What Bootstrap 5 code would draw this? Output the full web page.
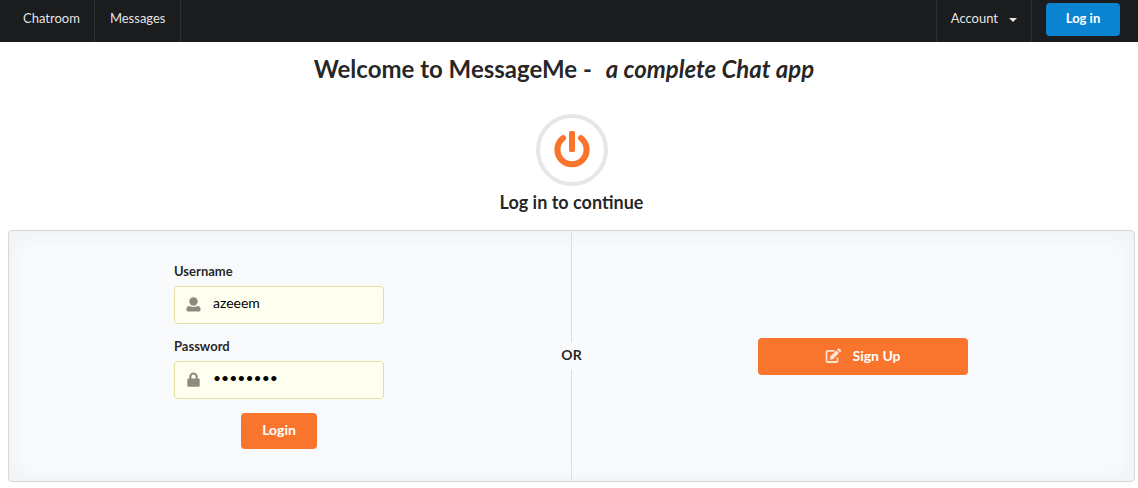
<!DOCTYPE html>
<html lang="en">
<head>
<meta charset="utf-8">
<meta name="viewport" content="width=device-width, initial-scale=1">
<title>MessageMe</title>
<link rel="stylesheet" href="https://cdn.jsdelivr.net/npm/bootstrap@5.3.0/dist/css/bootstrap.min.css">
<style>
  body { font-family: Lato, "Liberation Sans", sans-serif; font-size: 13px; line-height: 18px; color: rgba(0,0,0,.87); background: #fff; }
  .topbar { background: #1b1c1d; min-height: 42px; padding: 0 18px 0 8px; }
  .topbar .nav-link { color: rgba(255,255,255,.9); padding: 9px 14px 15px 15px; border-right: 1px solid #2d2e2f; }
  .topbar .account { padding-left: 14px; border-left: 1px solid #2d2e2f; }
  .topbar .account::after { margin-left: 11px; border-width: 4px 4px 0; vertical-align: 1px; }
  .btn { --bs-btn-font-size: 14px; --bs-btn-font-weight: 700; --bs-btn-line-height: 18px; --bs-btn-border-radius: 4px; --bs-btn-border-width: 0; --bs-btn-color: #fff; --bs-btn-hover-color: #fff; }
  .btn-blue { --bs-btn-font-size: 13px; --bs-btn-bg: #0a84d0; --bs-btn-hover-bg: #0876ba; width: 74px; height: 33px; margin: 3px 0 0 14px; padding: 0 0 3px; }
  .btn-orange { --bs-btn-bg: #f9742c; --bs-btn-hover-bg: #e9651e; }
  .title { font-size: 24px; line-height: 32px; font-weight: 700; padding: 11px 15px 0 0; }
  .title em { margin-left: 8px; }
  .subtitle { font-size: 18px; line-height: 24px; font-weight: 700; margin: 4px 0 16px; }
  .power { width: 72px; height: 72px; border: 4px solid #e6e6e6; margin-top: 29px; }
  main { padding: 0 3px 6px 8px; }
  .panel { background: #f9fafc; border: 1px solid #d6d7d9; border-radius: 4px; box-shadow: inset 0 2px 25px rgba(34,36,38,.05); }
  .panel-side { flex: 1 1 50%; min-height: 250px; }
  .side-login { padding: 31px 22px 32px 0; }
  .side-signup { padding-left: 20px; }
  .entry { width: 210px; }
  .form-label { font-weight: 700; margin-bottom: 6px; display: block; }
  .form-control { height: 38px; font-size: 14px; line-height: 18px; padding: 6px 12px 12px 38px; color: #000; background: #ffffef; border: 1px solid #e5dfa1; border-radius: 4px; }
  .form-control:focus { background: #ffffef; border-color: #d4c96a; box-shadow: none; }
  .field { margin-bottom: 13px; }
  .field-icon { left: 12px; top: 11px; opacity: .45; pointer-events: none; }
  .split { flex: 0 0 1px; width: 1px; }
  .split i { width: 1px; background: #dcddde; }
  .split span { height: 28px; line-height: 26px; font-size: 14px; font-weight: 700; }
  .btn-login { width: 76px; height: 36px; margin-top: 14px; padding: 0 0 2px; }
  .btn-signup { height: 37px; padding: 0; gap: 10px; }
</style>
</head>
<body>
<nav class="topbar d-flex align-items-start" aria-label="Main">
  <a class="nav-link" href="#">Chatroom</a>
  <a class="nav-link" href="#">Messages</a>
  <div class="dropdown ms-auto">
    <a class="nav-link account dropdown-toggle" href="#" role="button" data-bs-toggle="dropdown" aria-expanded="false">Account</a>
    <ul class="dropdown-menu"><li><a class="dropdown-item" href="#">Profile</a></li></ul>
  </div>
  <button class="btn btn-blue" type="button">Log in</button>
</nav>
<main>
  <h1 class="title text-center mb-0">Welcome to MessageMe - <em>a complete Chat app</em></h1>
  <div class="power rounded-circle mx-auto d-flex align-items-center justify-content-center">
    <svg width="36" height="38" viewBox="0 0 36 38" fill="none" stroke="#f9742c" aria-hidden="true">
      <path d="M9 7.200A14.600 14.600 0 1 0 27 7.200" stroke-width="6" stroke-linecap="round"/>
      <rect x="15" y="0" width="6" height="21" rx="1.600" fill="#f9742c" stroke="none"/>
    </svg>
  </div>
  <h2 class="subtitle text-center">Log in to continue</h2>
  <section class="panel d-flex">
    <div class="panel-side side-login d-flex justify-content-center">
      <form class="entry">
        <label class="form-label" for="username">Username</label>
        <div class="field position-relative">
          <input class="form-control" id="username" type="text" value="azeeem">
          <svg class="field-icon position-absolute" width="15" height="15" viewBox="0 0 15 15" aria-hidden="true"><circle cx="7.500" cy="4.500" r="4.200"/><path d="M3.600 9C5.800 10.400 9.200 10.400 11.400 9C13.600 9 14.500 10.400 14.500 12V13Q14.500 14.500 13 14.500H2Q.5 14.500 .5 13V12C.5 10.400 1.400 9 3.600 9Z"/></svg>
        </div>
        <label class="form-label" for="password">Password</label>
        <div class="position-relative">
          <input class="form-control" id="password" type="password" value="password">
          <svg class="field-icon position-absolute" width="15" height="15" viewBox="0 0 15 15" aria-hidden="true"><path fill-rule="evenodd" d="M3.300 6.600V4.700a4.200 4.200 0 0 1 8.400 0V6.600H12.500Q13.700 6.600 13.700 7.800V13.600Q13.700 14.800 12.500 14.800H2.500Q1.300 14.800 1.300 13.600V7.800Q1.300 6.600 2.500 6.600ZM5.400 6.600H9.600V4.700a2.100 2.100 0 0 0-4.200 0Z"/></svg>
        </div>
        <div class="text-center"><button class="btn btn-orange btn-login" type="submit">Login</button></div>
      </form>
    </div>
    <div class="split d-flex flex-column align-items-center">
      <i class="flex-fill"></i><span>OR</span><i class="flex-fill"></i>
    </div>
    <div class="panel-side side-signup d-flex align-items-center justify-content-center">
      <button class="btn btn-orange btn-signup entry d-flex align-items-center justify-content-center" type="button">
        <svg width="17" height="16" viewBox="0 0 17 16" fill="none" stroke="#fff" opacity=".8" aria-hidden="true"><path d="M9.500 2.800H2.500Q1.500 2.800 1.500 3.800V13Q1.500 14 2.500 14H11.500Q12.500 14 12.500 13V9.800" stroke-width="1.800"/><path d="M5.200 8.500L11.300 2.400L14 5.100L7.900 11.200L4.800 11.600ZM12 1.700L13 .7Q13.800 0 14.600 .7L15.900 2Q16.500 2.700 15.900 3.400L14.800 4.400Z" fill="#fff" stroke="none"/></svg>
        Sign Up
      </button>
    </div>
  </section>
</main>
<script src="https://cdn.jsdelivr.net/npm/bootstrap@5.3.0/dist/js/bootstrap.bundle.min.js"></script>
</body>
</html>
